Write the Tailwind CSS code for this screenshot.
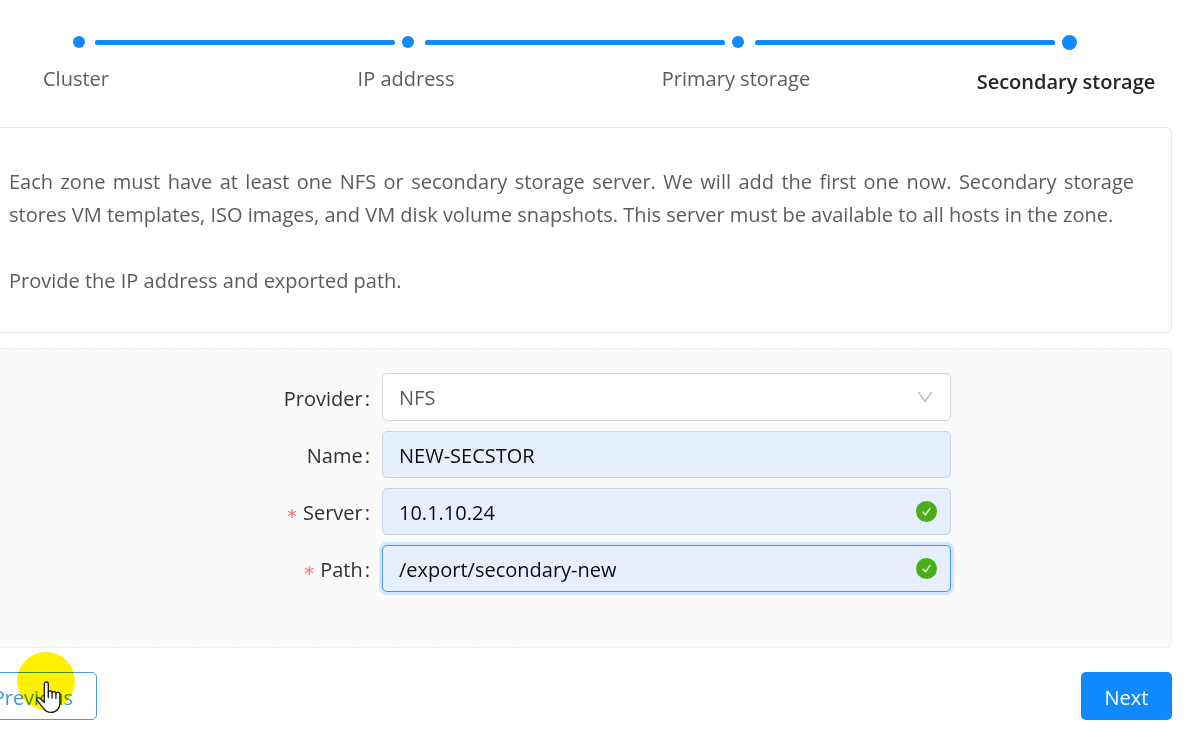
<!DOCTYPE html>
<html lang="en">
<head>
<meta charset="utf-8">
<meta name="viewport" content="width=device-width, initial-scale=1">
<title>Add zone - Secondary storage</title>
<script src="https://cdn.jsdelivr.net/npm/@tailwindcss/browser@4"></script>
</head>
<body class="bg-white overflow-x-hidden font-['Open_Sans','Noto_Sans',sans-serif] text-[20px] text-[#5c5c5c]">
<main class="relative pt-[34px]">

  <ol class="grid grid-cols-4 -ml-[85px] -mr-[37px] mb-[28px]">
    <li>
      <div class="flex items-center h-4">
        <span class="flex-1"></span>
        <span class="w-[30px] pl-2"><span class="block size-3 rounded-full bg-[#1089ff]"></span></span>
        <span class="flex-1 h-[5px] rounded-l-xs bg-[#1089ff]"></span>
      </div>
      <div class="pt-3 pr-2 text-center leading-[34px]">Cluster</div>
    </li>
    <li>
      <div class="flex items-center h-4">
        <span class="flex-1 h-[5px] rounded-r-xs bg-[#1089ff]"></span>
        <span class="w-[30px] pl-[7px]"><span class="block size-3 rounded-full bg-[#1089ff]"></span></span>
        <span class="flex-1 h-[5px] rounded-l-xs bg-[#1089ff]"></span>
      </div>
      <div class="pt-3 pr-2 text-center leading-[34px]">IP address</div>
    </li>
    <li>
      <div class="flex items-center h-4">
        <span class="flex-1 h-[5px] rounded-r-xs bg-[#1089ff]"></span>
        <span class="w-[30px] pl-[7px]"><span class="block size-3 rounded-full bg-[#1089ff]"></span></span>
        <span class="flex-1 h-[5px] rounded-l-xs bg-[#1089ff]"></span>
      </div>
      <div class="pt-3 pr-2 text-center leading-[34px]">Primary storage</div>
    </li>
    <li aria-current="step">
      <div class="flex items-center h-4">
        <span class="flex-1 h-[5px] rounded-r-xs bg-[#1089ff]"></span>
        <span class="w-[30px] pl-[7px]"><span class="block size-[15px] rounded-full bg-[#1089ff]"></span></span>
        <span class="flex-1"></span>
      </div>
      <div class="pt-[15px] pr-2 text-center leading-[34px] font-semibold text-[#262626]">Secondary storage</div>
    </li>
  </ol>

  <section class="mr-[26px] border border-l-0 border-[#e8e8e8] rounded-r-md pt-[37px] pb-[35px] pl-[9px] pr-[37px] leading-[33px]">
    <p class="text-justify">Each zone must have at least one NFS or secondary storage server. We will add the first one now. Secondary storage stores VM templates, ISO images, and VM disk volume snapshots. This server must be available to all hosts in the zone.</p>
    <p class="mt-[33px]">Provide the IP address and exported path.</p>
  </section>

  <form>
    <div class="mt-[15px] mr-[26px] border border-l-0 border-dashed border-[#ededed] rounded-r-md bg-[#fafafa] pt-6 pb-[55px] grid grid-cols-[382fr_569fr_220fr] gap-y-[10px] items-center text-[#303030]">
      <label for="provider" class="col-start-1 pt-[3px] pr-3 text-right">Provider<span class="pl-[2px]">:</span></label>
      <div class="relative">
        <select id="provider" class="block w-full h-12 appearance-none rounded-[5px] border border-[#d6d6d6] bg-white pl-4 pr-12 pt-[2px] text-[#5c5c5c] outline-none"><option>NFS</option></select>
        <svg class="absolute right-[18px] top-[18px] w-4 h-3 pointer-events-none" viewBox="0 0 16 12" fill="none" stroke="#bdbdbd" stroke-width="1.5" aria-hidden="true"><path d="M1.2 1 8 10.4 14.8 1"/></svg>
      </div>

      <label for="name" class="col-start-1 pt-[3px] pr-3 text-right">Name<span class="pl-[2px]">:</span></label>
      <input id="name" type="text" value="NEW-SECSTOR" class="block w-full h-[47px] rounded-[5px] border border-[#cdd4df] bg-[#e6effe] px-4 pt-[2px] text-[#0c0c12] outline-none">

      <label for="server" class="col-start-1 pt-[3px] pr-3 text-right"><span class="inline-block leading-none align-[-3px] pr-[6px] font-['DejaVu_Sans'] text-[#ff6b6c]">*</span>Server<span class="pl-[2px]">:</span></label>
      <div class="relative">
        <input id="server" type="text" value="10.1.10.24" class="block w-full h-[47px] rounded-[5px] border border-[#c6d3e6] bg-[#e7eefd] pl-4 pr-12 pt-[2px] text-[#0c0c12] outline-none">
        <svg class="absolute right-[14px] top-[13px] size-[21px]" viewBox="0 0 21 21" aria-hidden="true"><circle cx="10.5" cy="10.5" r="10.5" fill="#4bae18"/><path d="M6.6 10.8 9.4 13.8 14.2 7.2" fill="none" stroke="#e8f7df" stroke-width="1.4"/></svg>
      </div>

      <label for="path" class="col-start-1 pt-[3px] pr-3 text-right"><span class="inline-block leading-none align-[-3px] pr-[6px] font-['DejaVu_Sans'] text-[#ff6b6c]">*</span>Path<span class="pl-[2px]">:</span></label>
      <div class="relative">
        <input id="path" type="text" value="/export/secondary-new" class="block w-full h-[47px] rounded-[5px] border border-[#4597ea] bg-[#e7eefd] pl-4 pr-12 pt-[2px] text-[#0c0c12] outline-none shadow-[0_0_0_3px_#cfe6fd]">
        <svg class="absolute right-[14px] top-[13px] size-[21px]" viewBox="0 0 21 21" aria-hidden="true"><circle cx="10.5" cy="10.5" r="10.5" fill="#4bae18"/><path d="M6.6 10.8 9.4 13.8 14.2 7.2" fill="none" stroke="#e8f7df" stroke-width="1.4"/></svg>
      </div>
    </div>

    <div class="mt-6 mr-[26px] -ml-8 flex justify-between">
      <button type="button" class="h-12 w-[129px] rounded-[5px] border border-[#4597ea] bg-white pr-[23px] pt-[3px] text-right text-[#3f96ee]">Previous</button>
      <button type="button" class="h-12 w-[91px] rounded-[5px] bg-[#1089ff] pt-[3px] text-white">Next</button>
    </div>
  </form>

  <!-- Pointer with click highlight -->
  <div class="absolute left-[17px] top-[652px] size-[58px] rounded-full bg-[#fff000] mix-blend-multiply pointer-events-none"></div>
  <svg class="absolute left-[35px] top-[680px] w-7 h-[34px] pointer-events-none" viewBox="0 0 28 34" fill="#fff" stroke="#1a1a1a" stroke-width="1.3" stroke-linejoin="round" stroke-linecap="round" aria-hidden="true">
    <path d="M9.3 22.5V4a2 2 0 0 1 4 0v8.500a1.900 1.900 0 0 1 3.800 .5a1.900 1.900 0 0 1 3.800 .9a1.900 1.900 0 0 1 4 1v8c0 5-3 9.500-9 9.500c-4 0-6.300-2-8.200-5L2 20.200c-1-2 .8-3.300 2.700-2.200z"/>
    <path d="M13.300 12v5.500M17.100 13v5M20.900 14v4.500" fill="none"/>
  </svg>
</main>
</body>
</html>
